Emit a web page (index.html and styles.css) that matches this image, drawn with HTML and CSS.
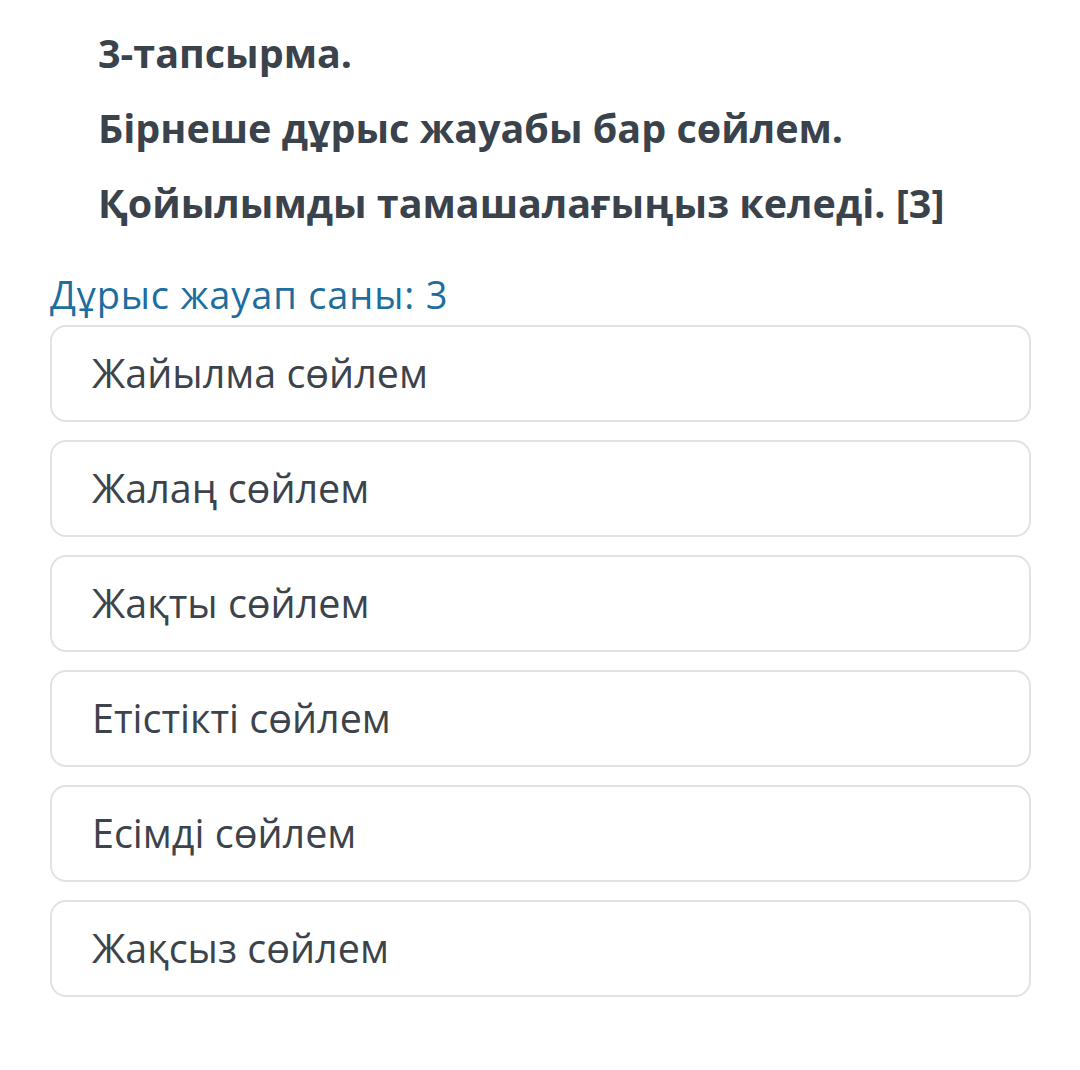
FILE: index.html
```html
<!DOCTYPE html>
<html lang="kk">
<head>
<meta charset="utf-8">
<title>3-тапсырма</title>
<link rel="stylesheet" href="styles.css">
</head>
<body>
<div class="page">
  <div class="question">
    <p class="q-line">3-тапсырма.</p>
    <p class="q-line">Бірнеше дұрыс жауабы бар сөйлем.</p>
    <p class="q-line">Қойылымды тамашалағыңыз келеді. [3]</p>
  </div>
  <div class="hint">Дұрыс жауап саны: 3</div>
  <div class="options">
    <div class="option">Жайылма сөйлем</div>
    <div class="option">Жалаң сөйлем</div>
    <div class="option">Жақты сөйлем</div>
    <div class="option">Етістікті сөйлем</div>
    <div class="option">Есімді сөйлем</div>
    <div class="option">Жақсыз сөйлем</div>
  </div>
</div>
</body>
</html>
```
FILE: styles.css
```css
html, body {
  margin: 0;
  padding: 0;
  background: #ffffff;
}
body {
  font-family: "Open Sans", "Noto Sans", sans-serif;
}
.page {
  padding: 16px 49px 0 50px;
}
.question {
  padding-left: 48px;
}
.q-line {
  margin: 0;
  font-size: 39.5px;
  font-weight: 700;
  line-height: 75px;
  color: #3a424c;
}
.hint {
  margin-top: 28px;
  font-size: 38px;
  letter-spacing: 0.85px;
  line-height: 50px;
  color: #1c6e9e;
}
.options {
  display: flex;
  flex-direction: column;
  gap: 18px;
  margin-top: 6px;
}
.option {
  box-sizing: border-box;
  height: 97px;
  border: 2px solid #e2e2e2;
  border-radius: 16px;
  padding: 0 0 2px 40px;
  display: flex;
  align-items: center;
  font-size: 39.5px;
  color: #3d434b;
}
```
